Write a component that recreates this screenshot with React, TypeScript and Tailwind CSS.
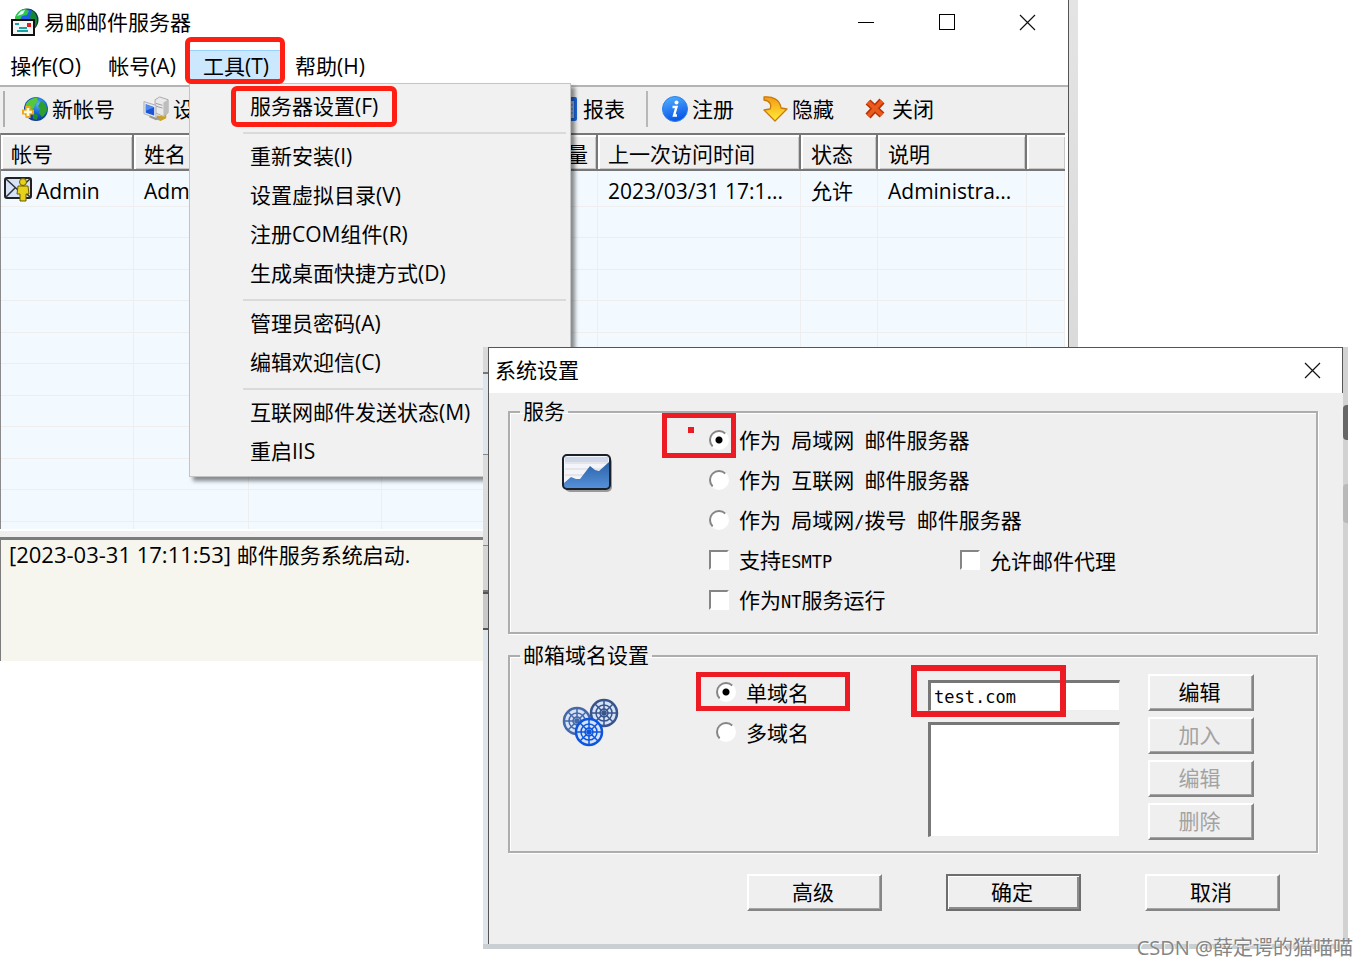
import type { ReactNode } from "react";

interface ToolButtonProps {
    label: string;
    icon: ReactNode;
}

interface OptionProps {
    id: string;
    label: string;
    type: "radio" | "checkbox";
    name?: string;
    checked?: boolean;
}

interface PushButtonProps {
    children: ReactNode;
    size?: "small" | "large";
    isDefault?: boolean;
    disabled?: boolean;
}

const MENU_GROUPS = [
    ["服务器设置(F)"],
    ["重新安装(I)", "设置虚拟目录(V)", "注册COM组件(R)", "生成桌面快捷方式(D)"],
    ["管理员密码(A)", "编辑欢迎信(C)"],
    ["互联网邮件发送状态(M)", "重启IIS"],
];

const COLUMNS = [
    { title: "帐号", width: "w-[133px]" },
    { title: "姓名", width: "w-[115px]" },
    { title: "", width: "w-[133px]" },
    { title: "容量", width: "w-[216px]", right: true },
    { title: "上一次访问时间", width: "w-[203px]" },
    { title: "状态", width: "w-[77px]" },
    { title: "说明", width: "w-[149px]" },
    { title: "", width: "border-r-0" },
];

const EMPTY_ROWS = Array.from({ length: 10 }, (_, i) => i);

function AppIcon() {
    return (
        <svg width="28" height="28" viewBox="0 0 28 28">
            <circle cx="16" cy="12" r="11.5" fill="#0a3c28" />
            <circle cx="15.5" cy="11.5" r="10.5" fill="#1d5ee8" />
            <path d="M4 9c2-5 6-8 10-8l4 2-2 4-5 1-2 4-5 1z" fill="#2fc64a" />
            <path d="M20 3c4 2 6 6 6 10s-2 7-5 9l-1-5 2-4-3-3z" fill="#128a2c" />
            <path d="M6 8l4-5 4-1-2 4z" fill="#d6f7ff" />
            <rect x="1" y="12" width="22" height="15" fill="#f2f5f5" stroke="#111" strokeWidth="2" />
            <path d="M4 16h4M8 20h8M6 23h11" stroke="#19a0a0" strokeWidth="2" />
            <path d="M16 15h4v4h-4z" fill="#e02020" />
        </svg>
    );
}

function GlobeAddIcon() {
    return (
        <svg width="26" height="26" viewBox="0 0 26 26">
            <defs>
                <radialGradient id="globe" cx="60%" cy="30%" r="70%">
                    <stop offset="0" stopColor="#59b6f5" />
                    <stop offset="0.5" stopColor="#1668d0" />
                    <stop offset="1" stopColor="#0b3590" />
                </radialGradient>
            </defs>
            <circle cx="14" cy="13" r="12" fill="url(#globe)" />
            <path d="M4 8c2-4 7-6.500 11-6l1 3-3 3-1 4-4 3-4 1c-1-3-1-6 0-8z" fill="#55c83c" />
            <path d="M19 5c4 2 6 6 6 9-1 3-3 6-5 7l-3-4 1-4-2-3z" fill="#2f9e2c" />
            <path d="M11 17l5 2-1 5-4-1z" fill="#1d8a2c" />
            <path d="M6 10v12M0 16h12" stroke="#f0a818" strokeWidth="5" />
            <path d="M6 12v8M2 16h8" stroke="#fffbe0" strokeWidth="2.500" />
        </svg>
    );
}

function ComputerIcon() {
    return (
        <svg width="28" height="28" viewBox="0 0 28 28">
            <path d="M13 4l5-3 9 3v14l-5 4-9-4z" fill="#e9e9e9" stroke="#a5a5a5" />
            <path d="M22 7l5-3v14l-5 4z" fill="#bdbdbd" />
            <path d="M14 8l7 2M14 11l7 2" stroke="#999" />
            <path d="M15 21l8 1 2-3v5l-6 3-5-2z" fill="#c8a224" />
            <path d="M1 6l13 4v14L1 19z" fill="#e4e6ea" stroke="#a9adb5" />
            <path d="M3 9l9 3v9l-9-3z" fill="#1a55d6" />
            <path d="M3 9l9 3-9 4z" fill="#4f88ee" />
            <path d="M7 22l7 3 3-2" stroke="#999" strokeWidth="2" fill="none" />
        </svg>
    );
}

function ReportIcon() {
    return (
        <svg width="26" height="26" viewBox="0 0 26 26">
            <rect x="4" y="1" width="20" height="24" rx="2" fill="#1d6be0" />
            <rect x="7" y="5" width="14" height="17" fill="#9cc8ff" />
            <path d="M8 9h12M8 13h12M8 17h12" stroke="#4a8ee8" />
        </svg>
    );
}

function InfoIcon() {
    return (
        <svg width="26" height="26" viewBox="0 0 26 26">
            <defs>
                <linearGradient id="info" x1="0" y1="0" x2="0.300" y2="1">
                    <stop offset="0" stopColor="#55b4ff" />
                    <stop offset="1" stopColor="#0a58e8" />
                </linearGradient>
            </defs>
            <circle cx="13" cy="13" r="12.500" fill="url(#info)" stroke="#2a80e8" />
            <circle cx="14.500" cy="6.500" r="2" fill="#fff" />
            <path d="M10.500 11h4l-2.500 8.500h3" stroke="#fff" strokeWidth="2.400" fill="none" />
        </svg>
    );
}

function HideIcon() {
    return (
        <svg width="26" height="26" viewBox="0 0 26 26">
            <defs>
                <linearGradient id="hide" x1="0" y1="0" x2="0" y2="1">
                    <stop offset="0" stopColor="#f59a12" />
                    <stop offset="1" stopColor="#ffee38" />
                </linearGradient>
            </defs>
            <path
                d="M2 1c9-1 16 3 17 11l6 1-12 12L2 14l6-1c2-4 0-8-6-9z"
                fill="url(#hide)"
                stroke="#c87a0c"
                strokeWidth="1.300"
                strokeLinejoin="round"
            />
        </svg>
    );
}

function QuitIcon() {
    return (
        <svg width="26" height="26" viewBox="0 0 26 26">
            <path d="M6 6l14 13M20 5L6 20" stroke="#b83208" strokeWidth="7" />
            <path d="M6 6l14 13M20 5L6 20" stroke="#ea5a1c" strokeWidth="4" />
        </svg>
    );
}

function UserMailIcon() {
    return (
        <svg width="30" height="26" viewBox="0 0 30 26">
            <rect x="1" y="2" width="26" height="20" rx="2" fill="#d6e2f8" stroke="#222" strokeWidth="2" />
            <path d="M2 3l12 11L26 3M2 21l9-9M26 21l-9-9" stroke="#333" strokeWidth="1.500" fill="none" />
            <circle cx="19" cy="6" r="3.500" fill="#e6d21a" stroke="#6b5c00" />
            <path d="M14 10h10l1 8h-3v7h-6v-7h-3z" fill="#e6d21a" stroke="#6b5c00" />
        </svg>
    );
}

function ChartIcon() {
    return (
        <svg width="50" height="38" viewBox="0 0 50 38">
            <defs>
                <linearGradient id="chart" x1="0" y1="0" x2="0" y2="1">
                    <stop offset="0" stopColor="#2a62a8" />
                    <stop offset="1" stopColor="#5590d8" />
                </linearGradient>
            </defs>
            <rect x="3" y="3" width="47" height="35" rx="5" fill="#9a9a9a" />
            <rect x="1" y="1" width="47" height="34" rx="4" fill="#f3f5fa" />
            <path d="M3 3h43v5H3z" fill="#cfd8ea" />
            <path d="M3 9h43M3 15h43M3 21h43" stroke="#d8d4d4" />
            <path d="M2 29l7-6 5 2h4l10-13 5 4 4 1 10-9v26H2z" fill="url(#chart)" />
            <rect x="1" y="1" width="47" height="34" rx="4" fill="none" stroke="#1c2028" strokeWidth="2" />
        </svg>
    );
}

function NetGlobe({ x, y, color }: { x: number; y: number; color: string }) {
    return (
        <g transform={`translate(${x} ${y})`} stroke={color} fill="none" strokeWidth="1.500">
            <circle r="13" fill="#d5e2f8" strokeWidth="2.500" />
            <circle r="8" />
            <circle r="4" />
            <path d="M-13 0h26M0-13v26M-9-9L9 9M9-9L-9 9" />
        </g>
    );
}

function NetworkIcon() {
    return (
        <svg width="57" height="50" viewBox="0 0 57 50">
            <NetGlobe x={15} y={23} color="#4468a8" />
            <NetGlobe x={42} y={15} color="#38548c" />
            <NetGlobe x={27} y={34} color="#0d55dc" />
        </svg>
    );
}

function CloseGlyph() {
    return (
        <svg width="17" height="17" viewBox="0 0 17 17">
            <path d="M1 1l15 15M16 1L1 16" stroke="#111" strokeWidth="1.200" />
        </svg>
    );
}

function ToolButton({ label, icon }: ToolButtonProps) {
    return (
        <button className="flex shrink-0 items-center gap-1">
            <span className="flex w-[26px] justify-center">{icon}</span>
            {label}
        </button>
    );
}

// Half-width characters of the dialog font are fixed pitch
function DialogText({ children }: { children: string }) {
    return (
        <>
            {children.split(/([\x20-\x7e]+)/).map((part, i) =>
                i % 2 ? (
                    <span key={i} className="font-['DejaVu_Sans_Mono',monospace] text-[17px]">{part}</span>
                ) : (
                    part
                )
            )}
        </>
    );
}

function Option({ id, label, type, name, checked }: OptionProps) {
    return (
        <div className="flex h-10 items-center gap-[10px]">
            <input
                id={id}
                type={type}
                name={name}
                defaultChecked={checked}
                className={`h-5 w-5 shrink-0 appearance-none border-2 border-t-[#858585] border-r-white border-b-white border-l-[#858585] bg-white ${type === "radio"
                        ? "rounded-full checked:bg-[radial-gradient(circle,#000_3px,#fff_4px)]"
                        : ""
                    }`}
            />
            <label htmlFor={id} className="whitespace-pre">
                <DialogText>{label}</DialogText>
            </label>
        </div>
    );
}

function PushButton({ children, size = "large", isDefault, disabled }: PushButtonProps) {
    return (
        <button
            disabled={disabled}
            className={`h-[37px] border-2 bg-[#efefef] pr-[3px] pb-1 disabled:text-[#a3a3a3] ${size === "small" ? "w-[106px]" : "w-[135px]"} ${isDefault
                    ? "border-[#6e6e6e] shadow-[inset_1px_1px_0_#fff,inset_-2px_-2px_0_#8c8c8c]"
                    : "border-t-white border-r-[#858585] border-b-[#858585] border-l-white shadow-[inset_-1px_-1px_0_#a5a5a5]"
                }`}
        >
            {children}
        </button>
    );
}

function ToolsMenu() {
    return (
        <div className="absolute top-[33px] left-0 z-10 w-[382px] border border-[#c4c4c4] bg-[#f1f1f1] py-1 shadow-[4px_4px_4px_rgba(0,0,0,0.45)]">
            {MENU_GROUPS.map((group, i) => (
                <div key={i}>
                    {i > 0 && (
                        <div className="flex h-[11px] items-center pr-1 pl-[53px]">
                            <div className="h-[2px] flex-1 bg-[#dadada]" />
                        </div>
                    )}
                    {group.map((item) => (
                        <button key={item} className="block h-[39px] w-full pb-[3px] pl-[60px] text-left">
                            {item}
                        </button>
                    ))}
                </div>
            ))}
            <div className="absolute top-[2px] left-[41px] h-[41px] w-[166px] rounded-md border-5 border-[#ff1f12]" />
        </div>
    );
}

function AccountTable() {
    const cell = "truncate border-r border-b border-[#eeeeee] pt-1 pl-[10px]";
    return (
        <table className="w-full table-fixed border-separate border-spacing-0 bg-[#f2faff]">
            <thead>
                <tr className="h-[38px]">
                    {COLUMNS.map((col, i) => (
                        <th
                            key={i}
                            className={`border-t-2 border-b-2 border-[#777] bg-[#efefef] pt-[3px] pl-[10px] font-normal shadow-[inset_2px_2px_0_#fff,inset_-1px_-1px_0_#c8c8c8] ${i < COLUMNS.length - 1 ? "border-r-2" : ""} ${col.width} ${col.right ? "pr-2 text-right" : "text-left"}`}
                        >
                            {col.title}
                        </th>
                    ))}
                </tr>
            </thead>
            <tbody>
                <tr className="h-9">
                    <td className="border-r border-b border-[#eeeeee] pl-[3px]">
                        <div className="flex items-center gap-[2px]">
                            <UserMailIcon />
                            <span className="pt-1">Admin</span>
                        </div>
                    </td>
                    <td className={cell}>Admin</td>
                    <td className={cell} />
                    <td className={cell} />
                    <td className={cell}>2023/03/31 17:1...</td>
                    <td className={cell}>允许</td>
                    <td className={cell}>Administra...</td>
                    <td className={cell} />
                </tr>
                {EMPTY_ROWS.map((row) => (
                    <tr key={row} className="odd:h-8 even:h-[31px]">
                        {COLUMNS.map((_, i) => (
                            <td key={i} className={cell} />
                        ))}
                    </tr>
                ))}
                <tr className="h-[7px]">
                    {COLUMNS.map((_, i) => (
                        <td key={i} className="border-r border-[#eeeeee]" />
                    ))}
                </tr>
            </tbody>
        </table>
    );
}

function MailServerWindow() {
    return (
        <div className="mr-[291px] bg-gradient-to-b from-[#e4e4e4] to-[#d2d2d2] pr-[9px]">
            <main className="border-r border-[#555] bg-white">
                <header className="mb-1 flex h-[46px] items-center pb-[2px] pl-[11px]">
                    <AppIcon />
                    <h1 className="flex-1 pl-[5px]">易邮邮件服务器</h1>
                    <button aria-label="最小化" className="flex w-[81px] justify-center">
                        <span className="h-px w-4 bg-black" />
                    </button>
                    <button aria-label="最大化" className="flex w-[81px] justify-center">
                        <span className="h-4 w-4 border border-black" />
                    </button>
                    <button aria-label="关闭窗口" className="flex w-[81px] justify-center">
                        <CloseGlyph />
                    </button>
                </header>

                <nav className="flex h-[33px] pl-px">
                    <button className="w-[94px] pr-[5px] pb-[2px]">操作(O)</button>
                    <button className="w-[94px] pb-[2px]">帐号(A)</button>
                    <div className="relative">
                        <button className="h-full w-[94px] border-t border-[#99d1ff] bg-[#cce8ff] pb-[2px]">工具(T)</button>
                        <ToolsMenu />
                        <div className="absolute top-[-13px] left-[-4px] z-10 h-[47px] w-[100px] rounded-md border-5 border-[#ff1f12]" />
                    </div>
                    <button className="w-[94px] pb-[2px]">帮助(H)</button>
                </nav>

                <div className="mt-[2px] flex h-[48px] items-center border-t-2 border-[#b4b4b4] bg-[#efefef] pb-[3px] pl-[3px]">
                    <div className="mr-[17px] h-9 w-[2px] bg-[#b0b0b0]" />
                    <div className="flex gap-7">
                        <ToolButton label="新帐号" icon={<GlobeAddIcon />} />
                        <ToolButton label="设置" icon={<ComputerIcon />} />
                    </div>
                    <div className="w-[338px] shrink-0" />
                    <ToolButton label="报表" icon={<ReportIcon />} />
                    <div className="mr-[14px] ml-[21px] h-9 w-[2px] bg-[#b8b8b8]" />
                    <div className="flex gap-7">
                        <ToolButton label="注册" icon={<InfoIcon />} />
                        <ToolButton label="隐藏" icon={<HideIcon />} />
                        <ToolButton label="关闭" icon={<QuitIcon />} />
                    </div>
                </div>

                <div className="mr-[3px] border-l border-[#8a8a8a]">
                    <AccountTable />
                </div>

                <div className="mt-[2px] h-[6px] bg-[#efefef]" />
                <div className="h-[124px] border-t-3 border-l border-[#7c7c7c] bg-[#f7f6ee] pl-2 leading-7">
                    <span className="text-[22px]">[2023-03-31 17:11:53] </span>
                    邮件服务系统启动.
                </div>
            </main>
        </div>
    );
}

function SettingsDialog() {
    const group = "relative border-2 border-[#adadad] shadow-[1px_1px_0_#fff,inset_1px_1px_0_#fff]";
    return (
        <div className="absolute top-[347px] right-[21px] left-[483px] z-20 flex bg-[#c9cfd3] pb-[5px]">
            <div className="flex w-[5px] flex-col bg-[#dce6ec]">
                <div className="h-[27px] border-b-2 border-[#777] bg-[#d9d9d9]" />
                <div className="h-[80px]" />
                <div className="h-[92px] border-y border-[#888] bg-[#dcdcdc]" />
                <div className="h-[46px] border-b-2 border-[#777] bg-[#d5d5d5]" />
                <div className="h-[38px] border-y-2 border-[#555] bg-[#c9c9c9]" />
            </div>
            <section className="flex-1 border-t border-l border-[#555] bg-[#efefef]">
                <header className="flex h-[45px] items-center border-r border-[#555] bg-white pl-[6px]">
                    <h2 className="flex-1 pb-[2px]">系统设置</h2>
                    <button aria-label="关闭对话框" className="flex w-[60px] justify-center">
                        <CloseGlyph />
                    </button>
                </header>

                <form className="pt-[11px] pr-[25px] pb-[33px] pl-[19px] font-['Noto_Sans_CJK_SC',sans-serif]">
                    <fieldset className={`${group} pb-3 pl-[52px]`}>
                        <legend className="-ml-[42px] h-4 px-[3px] leading-3">服务</legend>
                        <div className="flex">
                            <div className="w-[147px] pt-[34px]">
                                <ChartIcon />
                            </div>
                            <div className="relative">
                                <div className="absolute top-[-7px] left-[-47px] h-[45px] w-[74px] border-5 border-[#ed1c24]">
                                    <div className="mt-[9px] ml-[21px] h-[6px] w-[6px] bg-[#ed1c24]" />
                                </div>
                                <Option id="lan" type="radio" name="mode" label="作为 局域网 邮件服务器" checked />
                                <Option id="wan" type="radio" name="mode" label="作为 互联网 邮件服务器" />
                                <Option id="dial" type="radio" name="mode" label="作为 局域网/拨号 邮件服务器" />
                                <div className="flex">
                                    <div className="w-[251px]">
                                        <Option id="esmtp" type="checkbox" label="支持ESMTP" />
                                    </div>
                                    <Option id="proxy" type="checkbox" label="允许邮件代理" />
                                </div>
                                <Option id="nt" type="checkbox" label="作为NT服务运行" />
                            </div>
                        </div>
                    </fieldset>

                    <fieldset className={`${group} mt-[14px] pr-[62px] pb-[11px] pl-[52px]`}>
                        <legend className="-ml-[42px] h-4 px-[3px] leading-3">邮箱域名设置</legend>
                        <div className="flex pt-[10px]">
                            <div className="w-[154px] pt-6">
                                <NetworkIcon />
                            </div>
                            <div className="relative -mt-[2px] flex-1">
                                <div className="absolute top-0 left-[-20px] h-[39px] w-[154px] border-5 border-[#ed1c24]" />
                                <Option id="single" type="radio" name="domain" label="单域名" checked />
                                <Option id="multi" type="radio" name="domain" label="多域名" />
                            </div>
                            <div className="relative mr-[28px] flex w-[192px] flex-col gap-[11px] pt-[6px]">
                                <input
                                    type="text"
                                    aria-label="域名"
                                    defaultValue="test.com"
                                    className="h-[31px] w-full border-t-3 border-r border-b border-l-3 border-t-[#777] border-r-[#eee] border-b-[#eee] border-l-[#777] bg-white pl-[3px] font-['DejaVu_Sans_Mono',monospace] text-[17px]"
                                />
                                <select
                                    size={4}
                                    aria-label="域名列表"
                                    className="h-[115px] w-full appearance-none border-t-3 border-r border-b border-l-3 border-t-[#777] border-r-[#eee] border-b-[#eee] border-l-[#777] bg-white"
                                />
                                <div className="absolute top-[-9px] left-[-17px] h-[52px] w-[155px] border-6 border-[#ed1c24]" />
                            </div>
                            <div className="flex flex-col gap-[6px]">
                                <PushButton size="small">编辑</PushButton>
                                <PushButton size="small" disabled>加入</PushButton>
                                <PushButton size="small" disabled>编辑</PushButton>
                                <PushButton size="small" disabled>删除</PushButton>
                            </div>
                        </div>
                    </fieldset>

                    <div className="mt-[21px] flex justify-end gap-16 pr-[38px]">
                        <PushButton>高级</PushButton>
                        <PushButton isDefault>确定</PushButton>
                        <PushButton>取消</PushButton>
                    </div>
                </form>
            </section>
            <div className="w-[5px] bg-[#d2d2d2]">
                <div className="mt-[58px] h-[35px] rounded-l bg-[#666]" />
                <div className="mt-[44px] h-[39px] rounded-l bg-[#b9b9b9]" />
            </div>
        </div>
    );
}

export default function App() {
    return (
        <div className="relative min-h-screen overflow-hidden bg-white font-['Open_Sans','Noto_Sans_CJK_SC',sans-serif] text-[21px] leading-7 text-black">
            <MailServerWindow />
            <SettingsDialog />
            <p className="absolute top-[934px] right-4 z-30 text-xl text-[#858585] [text-shadow:1px_1px_0_#fff]">
                CSDN @薛定谔的猫喵喵
            </p>
        </div>
    );
}
